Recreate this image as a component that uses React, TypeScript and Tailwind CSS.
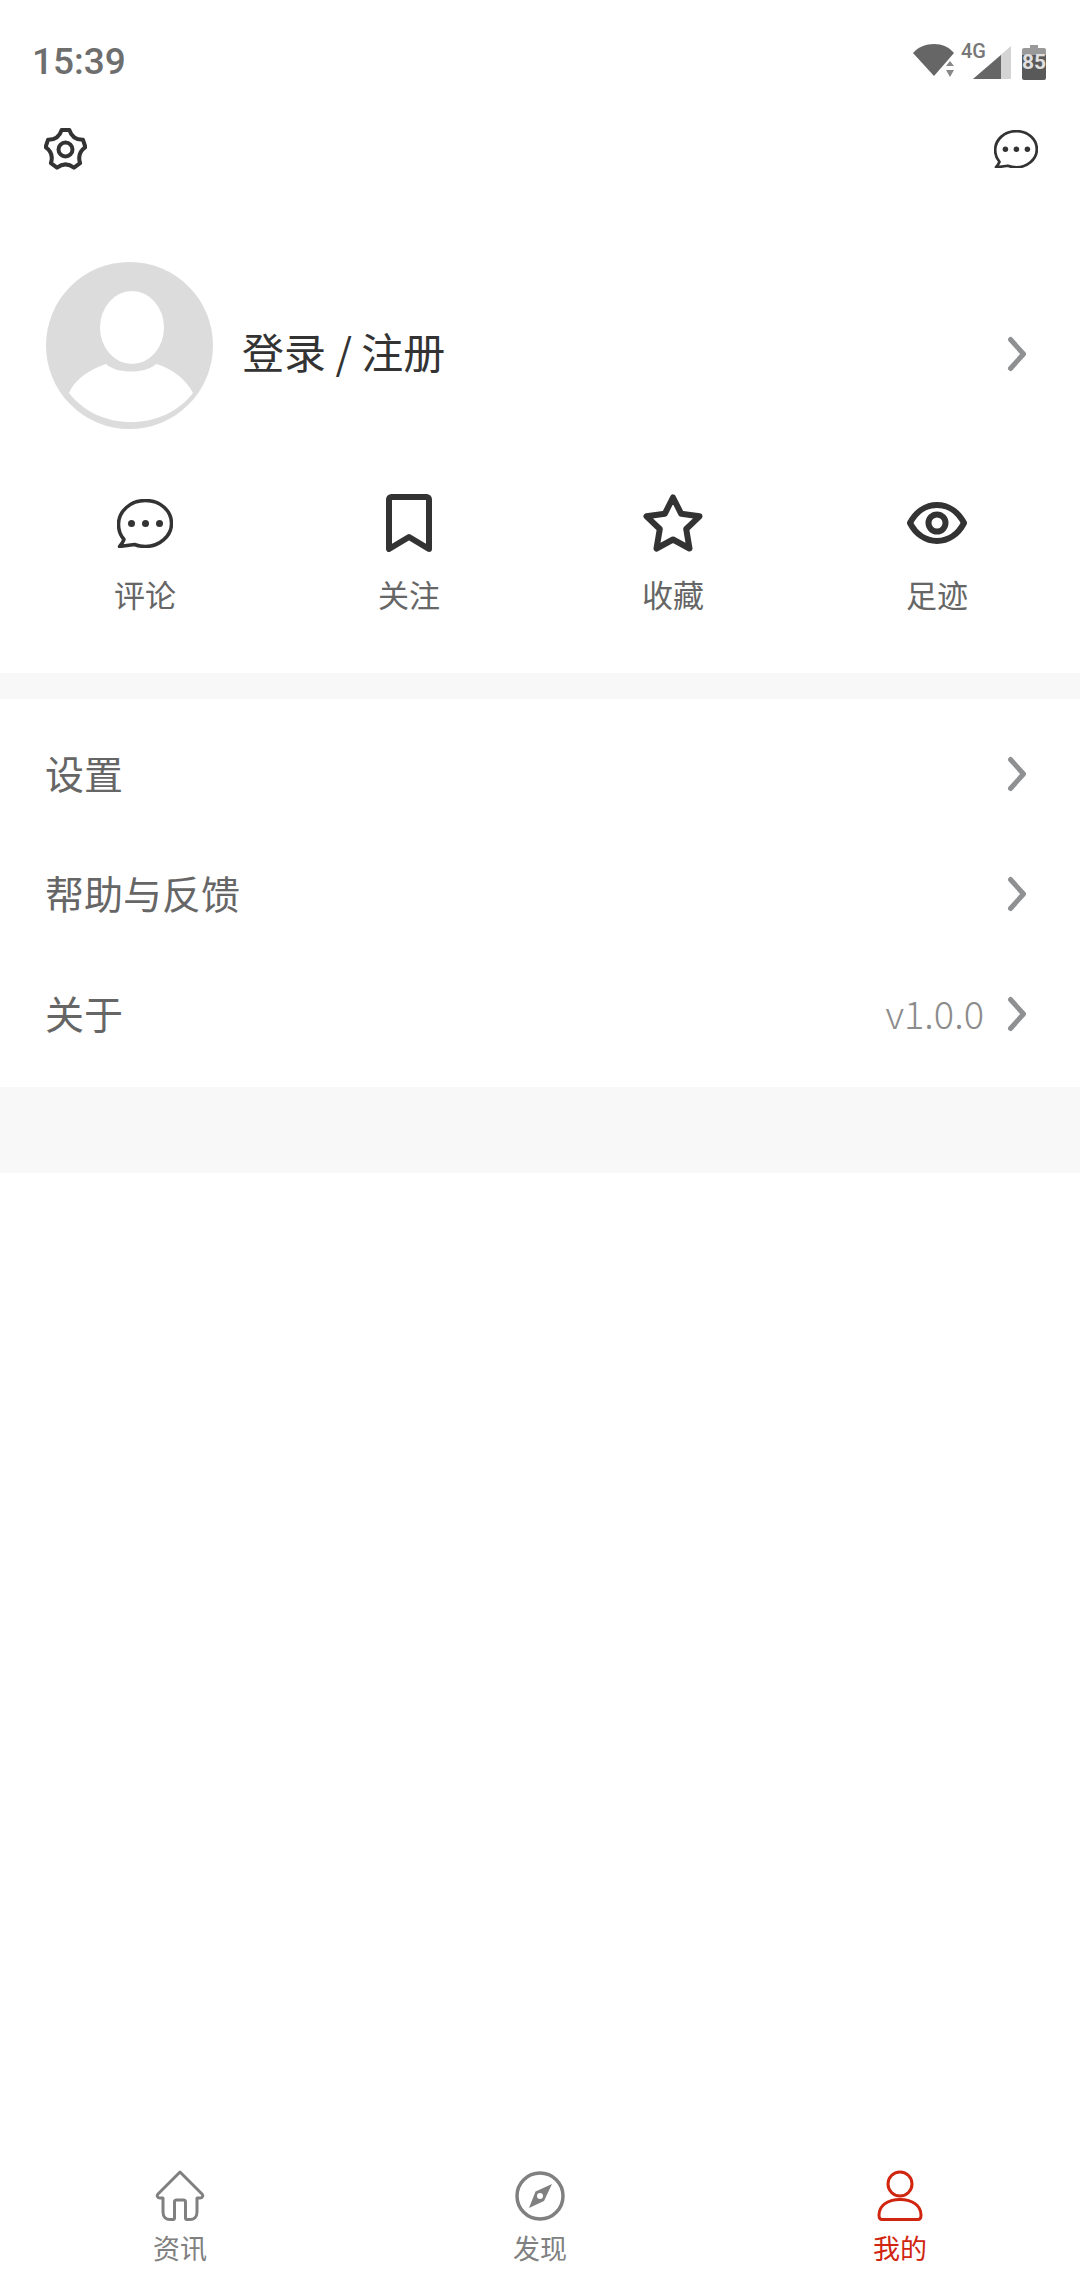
import React from "react";

const cjk = "font-['Noto_Sans_CJK_SC',sans-serif]";

function Chevron({ className = "" }: { className?: string }) {
  return (
    <svg width="20" height="36" viewBox="0 0 20 36" fill="none" className={className}>
      <path d="M3.5 3.5 16.5 18 3.5 32.5" stroke="#8f9091" strokeWidth="5" strokeLinecap="round" strokeLinejoin="round" />
    </svg>
  );
}

function Bubble({ size, stroke }: { size: number; stroke: number }) {
  return (
    <svg width={size} height={size * 0.875} viewBox="0 0 56 49" fill="none">
      <path
        d="M7 40.5C3.5 36.5 1.500 31.500 1.500 25.500 1.500 12 13.500 1.500 28.500 1.500S54.500 12 54.500 24.500 42.500 47.500 28.500 47.500C24.500 47.500 21 46.800 17.500 45.500L2.500 47.500C4.500 45.500 6 43 7 40.500Z"
        stroke="#333"
        strokeWidth={stroke}
        strokeLinejoin="round"
      />
      <circle cx="14.500" cy="24.500" r="3.500" fill="#333" />
      <circle cx="28.500" cy="24.500" r="3.500" fill="#333" />
      <circle cx="42.500" cy="24.500" r="3.500" fill="#333" />
    </svg>
  );
}

function Bookmark() {
  return (
    <svg width="46" height="58" viewBox="0 0 46 58" fill="none">
      <path d="M3 5.500A2.500 2.500 0 0 1 5.500 3h35A2.500 2.500 0 0 1 43 5.500V55L23 43 3 55Z" stroke="#333" strokeWidth="6" strokeLinejoin="round" />
    </svg>
  );
}

function Star() {
  return (
    <svg width="60" height="58" viewBox="0 0 60 58" fill="none">
      <path d="M30 3.500 38.200 19.800 56.500 22.300 43.200 35 46.500 54.500 30 45.500 13.500 54.500 16.800 35 3.500 22.300 21.800 19.800Z" stroke="#333" strokeWidth="6" strokeLinejoin="round" />
    </svg>
  );
}

function Eye() {
  return (
    <svg width="60" height="42" viewBox="0 0 60 42" fill="none">
      <path d="M3 21C9 9.500 19 3 30 3S51 9.500 57 21C51 32.500 41 39 30 39S9 32.500 3 21Z" stroke="#333" strokeWidth="6" strokeLinejoin="round" />
      <circle cx="30" cy="21" r="8.500" stroke="#333" strokeWidth="6" />
    </svg>
  );
}

// five soft lobes, not a regular cog
function Gear() {
  return (
    <svg width="43" height="45" viewBox="0 0 43 45" fill="none">
      <path
        d="M17.700 2.900H25.300Q28.400 13 39 12.800L41.400 20.100Q32.800 26.200 36.100 36.100L30 40.600Q21.500 34.200 13 40.600L6.900 36.100Q10.200 26.200 1.600 20.100L4 12.800Q14.600 13 17.700 2.900Z"
        stroke="#333"
        strokeWidth="4"
        strokeLinejoin="round"
      />
      <circle cx="21.500" cy="22.500" r="7" stroke="#333" strokeWidth="4" />
    </svg>
  );
}

function Avatar() {
  return (
    <svg width="167" height="167" viewBox="0 0 167 167">
      <circle cx="83.500" cy="83.500" r="83.500" fill="#dcdcdc" />
      <ellipse cx="86" cy="65.500" rx="32" ry="36.500" fill="#fff" />
      <path d="M23 131C30 115 48 106 60 102 70 112 100 112 110 102 125 106 140 117 147 131 132 150 110 160 85 160 60 160 38 150 23 131Z" fill="#fff" />
    </svg>
  );
}

function Home() {
  return (
    <svg width="50" height="52" viewBox="0 0 50 52" fill="none">
      <path
        d="M25 2 3 24C1.500 25.500 2.500 28 5 28H8V42C8 47 11 49.500 15 49.500H18C19 49.500 19.500 49 19.500 48V32C19.500 30.500 20.500 30 21.500 30H28.500C29.500 30 30.500 30.500 30.500 32V48C30.500 49 31 49.500 32 49.500H35C39 49.500 42 47 42 42V28H45C47.500 28 48.500 25.500 47 24Z"
        stroke="#808080"
        strokeWidth="3"
        strokeLinejoin="round"
      />
    </svg>
  );
}

function Compass() {
  return (
    <svg width="50" height="52" viewBox="0 0 50 52" fill="none">
      <circle cx="25" cy="26" r="23" stroke="#808080" strokeWidth="3.500" />
      <path fillRule="evenodd" d="M37 14 29 31 14 38 20.500 21.500ZM25 23a3 3 0 1 0 0 6 3 3 0 0 0 0-6Z" fill="#808080" />
    </svg>
  );
}

function Person() {
  return (
    <svg width="46" height="52" viewBox="0 0 46 52" fill="none">
      <circle cx="23" cy="14" r="12" stroke="#d0250f" strokeWidth="3" />
      <path d="M2 45C2 36 10 29.500 23 29.500S44 36 44 45C44 48 43 49.500 41 49.500H5C3 49.500 2 48 2 45Z" stroke="#d0250f" strokeWidth="3" strokeLinejoin="round" />
    </svg>
  );
}

function StatusIcons() {
  return (
    <div className="flex items-start h-[36px] font-['Roboto',sans-serif]">
      <svg width="42" height="36" viewBox="0 0 42 36">
        <path d="M0 10C5 4 13 1 21 1S36 4 41 10L21 33Z" fill="#666" />
        <path d="M37 18 41 23H33ZM37 34 33 27H41Z" fill="#888" />
      </svg>
      <div className="relative w-[38px] h-[36px] ml-[18px]">
        <svg width="38" height="34" viewBox="0 0 38 34" className="absolute left-0 top-[3px]">
          <path d="M38 0V33H0Z" fill="#d4d4d4" />
          <path d="M28 9V33H0Z" fill="#666" />
        </svg>
        <span className="absolute left-[-12px] top-[-2px] text-[20px] leading-[20px] font-medium text-[#777]">4G</span>
      </div>
      <div className="relative w-[24px] h-[35px] ml-[11px] mt-[2px]">
        <svg width="24" height="35" viewBox="0 0 24 35" className="absolute inset-0">
          <path d="M8 0H16V3H22A2 2 0 0 1 24 5V10H0V5A2 2 0 0 1 2 3H8Z" fill="#999" />
          <path d="M0 10H24V33A2 2 0 0 1 22 35H2A2 2 0 0 1 0 33Z" fill="#595959" />
        </svg>
        <span className="absolute inset-x-0 top-[7px] text-center text-[21px] leading-[20px] font-bold text-[#e0e0e0]">85</span>
      </div>
    </div>
  );
}

const actions = [
  { label: "评论", icon: <Bubble size={56} stroke={3.5} /> },
  { label: "关注", icon: <Bookmark /> },
  { label: "收藏", icon: <Star /> },
  { label: "足迹", icon: <Eye /> },
];

const menu = ["设置", "帮助与反馈", "关于"];

const tabs = [
  { label: "资讯", icon: <Home />, color: "text-[#808080]" },
  { label: "发现", icon: <Compass />, color: "text-[#808080]" },
  { label: "我的", icon: <Person />, color: "text-[#d0250f]" },
];

export default function App() {
  return (
    <div className={`flex flex-col w-[1080px] h-[2280px] bg-white ${cjk}`}>
      {/* status bar */}
      <div className="flex items-center justify-between h-[122px] pl-[32px] pr-[34px]">
        <span className="mt-[2px] font-['Roboto',sans-serif] text-[37px] font-medium text-[#6e6e6e]">15:39</span>
        <StatusIcons />
      </div>

      {/* top icons */}
      <div className="flex items-center justify-between h-[54px] pl-[44px] pr-[42px]">
        <Gear />
        <Bubble size={44} stroke={3.5} />
      </div>

      {/* profile */}
      <div className="flex items-center mt-[86px] pl-[46px] pr-[53px]">
        <Avatar />
        <span className="ml-[29px] pt-[9px] text-[42px] text-[#333]">登录 / 注册</span>
        <Chevron className="ml-auto mt-[17px]" />
      </div>

      {/* shortcuts */}
      <div className="grid grid-cols-4 mt-[64px] pl-[13px] pr-[11px] pb-[59px]">
        {actions.map((a) => (
          <div key={a.label} className="flex flex-col items-center">
            <div className="flex items-center justify-center h-[60px]">{a.icon}</div>
            <span className="mt-[21px] text-[31px] leading-[40px] text-[#666]">{a.label}</span>
          </div>
        ))}
      </div>

      <div className="h-[26px] bg-[#f8f8f8]" />

      {/* menu */}
      <div className="flex flex-col pt-[15px] pb-[13px]">
        {menu.map((m) => (
          <div key={m} className="flex items-center h-[120px] pl-[45px] pr-[53px]">
            <span className="pb-[3px] text-[39px] text-[#666]">{m}</span>
            {m === "关于" && <span className="ml-auto mr-[23px] pb-[3px] text-[38px] font-light text-[#8c8c8c]">v1.0.0</span>}
            <Chevron className={m === "关于" ? "" : "ml-auto"} />
          </div>
        ))}
      </div>

      <div className="h-[86px] bg-[#f8f8f8]" />

      <div className="flex-1" />

      {/* tab bar */}
      <div className="grid grid-cols-3 pb-[14px]">
        {tabs.map((t) => (
          <div key={t.label} className="flex flex-col items-center">
            <div className="flex items-center justify-center h-[52px]">{t.icon}</div>
            <span className={`mt-[8px] text-[27px] leading-[36px] ${t.color}`}>{t.label}</span>
          </div>
        ))}
      </div>
    </div>
  );
}
